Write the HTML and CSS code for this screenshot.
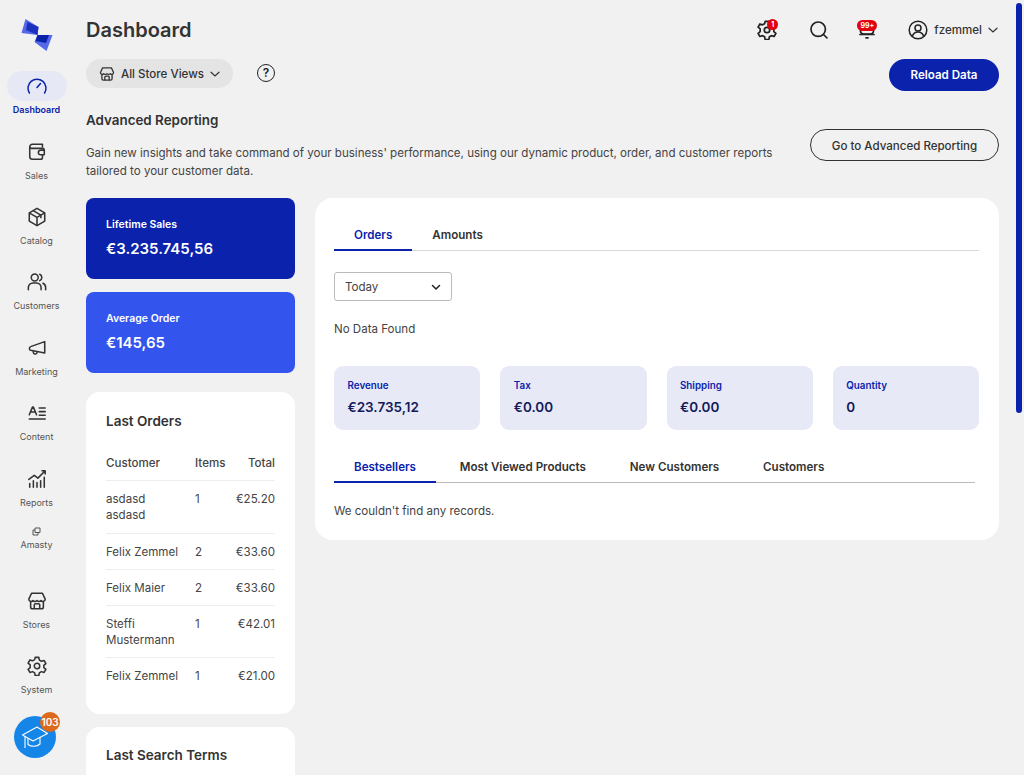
FILE: index.html
```html
<!DOCTYPE html>
<html lang="en">
  <head>
    <meta charset="utf-8">
    <title>Dashboard</title>
    <link rel="stylesheet" href="styles.css">
  </head>
  <body>
    <div class="app">
      <nav class="side">
        <div class="logo">
          <svg width="34" height="34" viewBox="0 0 34 34">
            <path d="M5.500 2 18.500 10 17.500 18 1.500 16Z" fill="#5568e8"/>
            <path d="M7.500 5 18.500 10 17.500 18 6 13Z" fill="#1c30c0"/>
            <path d="M17.500 18H32.500L26.500 34 14.500 25Z" fill="#5568e8"/>
            <path d="M17.500 18H29L26 26 15.500 24Z" fill="#0a22a8"/>
          </svg>
        </div>
        <a class="nav-item active">
          <span class="nav-icon">
            <svg width="22" height="22" viewBox="0 0 22 22" fill="none" stroke="#0a22a8" stroke-width="1.500" stroke-linecap="round"><path d="M3.400 18a9 9 0 1 1 15.200 0"/><path d="M11 12.500 14.500 8.500"/></svg>
          </span>
          Dashboard
        </a>
        <a class="nav-item">
          <span class="nav-icon">
            <svg width="20" height="20" viewBox="0 0 22 22" fill="none" stroke="#333" stroke-width="1.700" stroke-linejoin="round"><path d="M17 6V2.500H6A3 3 0 0 0 3 5.500V16a3 3 0 0 0 3 3h9a2 2 0 0 0 2-2v-3"/><path d="M3 5.500A2 2 0 0 0 5 7H17a2 2 0 0 1 2 2v5h-4a2.500 2.500 0 0 1 0-5h4"/></svg>
          </span>
          Sales
        </a>
        <a class="nav-item">
          <span class="nav-icon">
            <svg width="20" height="20" viewBox="0 0 22 22" fill="none" stroke="#333" stroke-width="1.700" stroke-linejoin="round"><path d="M11 1.500 19.500 6.500v9L11 20.500l-8.500-5v-9z"/><path d="M2.500 6.500l8.500 5 8.500-5M11 11.500v9M6.800 4l8.500 5v3.500"/></svg>
          </span>
          Catalog
        </a>
        <a class="nav-item">
          <span class="nav-icon">
            <svg width="20" height="20" viewBox="0 0 22 22" fill="none" stroke="#333" stroke-width="1.700" stroke-linecap="round"><circle cx="8.500" cy="6" r="3.800"/><path d="M1.500 19.500v-2.500a5 5 0 0 1 5-5h4a5 5 0 0 1 5 5v2.500"/><path d="M14 2.500a3.800 3.800 0 0 1 0 7M17.500 12.300a5 5 0 0 1 3 4.700v2.500"/></svg>
          </span>
          Customers
        </a>
        <a class="nav-item">
          <span class="nav-icon">
            <svg width="20" height="20" viewBox="0 0 22 22" fill="none" stroke="#333" stroke-width="1.700" stroke-linejoin="round"><path d="M19.500 4v12.500L4 13.500C2.200 13 2.200 10 4 9.500z"/><path d="M7 14.200v1.800a1.500 1.500 0 0 0 1.500 1.500h1a1.500 1.500 0 0 0 1.500-1.500v-.8"/></svg>
          </span>
          Marketing
        </a>
        <a class="nav-item">
          <span class="nav-icon">
            <svg width="20" height="20" viewBox="0 0 22 22" fill="none" stroke="#333" stroke-width="1.700" stroke-linecap="round"><path d="M2.500 13 6 4.500h1L10.500 13M4 10h5" stroke-linejoin="round"/><path d="M13.500 5.500H20M13.500 9.500H20M13.500 13.500H20M2.500 17.500H20"/></svg>
          </span>
          Content
        </a>
        <a class="nav-item">
          <span class="nav-icon">
            <svg width="20" height="20" viewBox="0 0 22 22" fill="none" stroke="#333" stroke-width="1.700" stroke-linecap="round" stroke-linejoin="round"><path d="M2 11.500 8 7l4 3 8-8M16.500 2H20v3.500"/><path d="M3 20v-4M7 20v-7M11 20v-5M15 20v-7M19 20V9"/></svg>
          </span>
          Reports
        </a>
        <a class="nav-item small">
          <span class="nav-icon">
            <svg width="9" height="9" viewBox="0 0 9 9" fill="none" stroke="#555" stroke-width="1"><path d="M3 1h5v4.500H3z"/><path d="M3 3H1v5h5V5.500"/></svg>
          </span>
          Amasty
        </a>
        <a class="nav-item">
          <span class="nav-icon">
            <svg width="20" height="20" viewBox="0 0 22 22" fill="none" stroke="#333" stroke-width="1.700" stroke-linejoin="round"><path d="M5 2.500h12l3 6.500a2.500 2.500 0 0 1-4.500 1.500 3 3 0 0 1-4.500 0 3 3 0 0 1-4.500 0A2.500 2.500 0 0 1 2 9z"/><path d="M4 11.500V17.500a2 2 0 0 0 2 2h10a2 2 0 0 0 2-2v-6"/><path d="M8 19.500v-4a1.500 1.500 0 0 1 1.500-1.500h3a1.500 1.500 0 0 1 1.500 1.500v4"/></svg>
          </span>
          Stores
        </a>
        <a class="nav-item">
          <span class="nav-icon">
            <svg width="20" height="20" viewBox="0 0 22 22" fill="none" stroke="#333" stroke-width="1.700" stroke-linejoin="round"><path d="M9 1.500h4l.6 3 2.300 1.300 2.900-.9 2 3.400-2.300 2v2.400l2.300 2-2 3.400-2.900-.9-2.300 1.300-.6 3H9l-.6-3-2.300-1.300-2.900.9-2-3.400 2.300-2V9.800l-2.300-2 2-3.400 2.900.9 2.300-1.300z"/><circle cx="11" cy="11" r="3"/></svg>
          </span>
          System
        </a>
      </nav>

      <main class="main">
        <header class="topbar">
          <h1>Dashboard</h1>
          <div class="top-actions">
            <span class="top-icon icon-gear">
              <svg width="20" height="20" viewBox="0 0 22 22" fill="none" stroke="#222" stroke-width="1.900" stroke-linejoin="round"><path d="M9 1.500h4l.6 3 2.300 1.300 2.900-.9 2 3.400-2.300 2v2.400l2.300 2-2 3.400-2.900-.9-2.300 1.300-.6 3H9l-.6-3-2.300-1.300-2.900.9-2-3.400 2.300-2V9.800l-2.300-2 2-3.400 2.900.9 2.300-1.300z"/><circle cx="11" cy="11" r="3"/></svg>
              <span class="dot">1</span>
            </span>
            <span class="top-icon icon-search">
              <svg width="20" height="20" viewBox="0 0 20 20" fill="none" stroke="#222" stroke-width="1.700" stroke-linecap="round"><circle cx="9.200" cy="9.200" r="7.200"/><path d="M14.500 14.500 18 18"/></svg>
            </span>
            <span class="top-icon icon-bell">
              <svg width="20" height="20" viewBox="0 0 20 20" fill="none" stroke="#222" stroke-width="1.700" stroke-linecap="round"><path d="M3.500 5v6a3 3 0 0 0 3 3h7a3 3 0 0 0 3-3V5"/><path d="M3 14.500h14M9 17.800h2"/></svg>
              <span class="dot wide">99+</span>
            </span>
            <span class="user">
              <svg width="20" height="20" viewBox="0 0 20 20" fill="none" stroke="#222" stroke-width="1.500"><circle cx="10" cy="10" r="8.800"/><circle cx="10" cy="8" r="3"/><path d="M4.500 16.500a5 4 0 0 1 11 0"/></svg>
              <span class="user-name">fzemmel</span>
              <svg class="chev" width="10" height="10" viewBox="0 0 10 10" fill="none" stroke="#333" stroke-width="1.200" stroke-linecap="round"><path d="M1 3.200 5 7l4-3.800"/></svg>
            </span>
          </div>
        </header>

        <div class="toolbar">
          <div class="store-switch">
            <svg width="16" height="16" viewBox="0 0 22 22" fill="none" stroke="#333" stroke-width="1.800" stroke-linejoin="round"><path d="M5 2.500h12l3 6.500a2.500 2.500 0 0 1-4.500 1.500 3 3 0 0 1-4.500 0 3 3 0 0 1-4.500 0A2.500 2.500 0 0 1 2 9z"/><path d="M4 11.500V17.500a2 2 0 0 0 2 2h10a2 2 0 0 0 2-2v-6"/><path d="M8 19.500v-4a1.500 1.500 0 0 1 1.500-1.500h3a1.500 1.500 0 0 1 1.500 1.500v4"/></svg>
            All Store Views
            <svg width="10" height="10" viewBox="0 0 10 10" fill="none" stroke="#333" stroke-width="1.200" stroke-linecap="round"><path d="M1 3.200 5 7l4-3.800"/></svg>
          </div>
          <span class="help">?</span>
          <button class="btn-primary">Reload Data</button>
        </div>

        <section class="promo">
          <div class="promo-text">
            <h2>Advanced Reporting</h2>
            <p>Gain new insights and take command of your business' performance, using our dynamic product, order, and customer reports tailored to your customer data.</p>
          </div>
          <button class="btn-outline">Go to Advanced Reporting</button>
        </section>

        <div class="columns">
          <div class="col-left">
            <div class="stat dark">
              <span>Lifetime Sales</span>
              <strong>€3.235.745,56</strong>
            </div>
            <div class="stat light">
              <span>Average Order</span>
              <strong>€145,65</strong>
            </div>
            <div class="card orders">
              <h3>Last Orders</h3>
              <table>
                <tr><th>Customer</th><th>Items</th><th class="num">Total</th></tr>
                <tr class="first"><td>asdasd<br>asdasd</td><td>1</td><td class="num">€25.20</td></tr>
                <tr><td>Felix Zemmel</td><td>2</td><td class="num">€33.60</td></tr>
                <tr><td>Felix Maier</td><td>2</td><td class="num">€33.60</td></tr>
                <tr><td>Steffi<br>Mustermann</td><td>1</td><td class="num">€42.01</td></tr>
                <tr><td>Felix Zemmel</td><td>1</td><td class="num">€21.00</td></tr>
              </table>
            </div>
            <div class="card terms">
              <h3>Last Search Terms</h3>
            </div>
          </div>

          <div class="panel">
            <div class="tabs">
              <span class="tab on">Orders</span>
              <span class="tab">Amounts</span>
            </div>
            <div class="select">
              Today
              <svg width="10" height="10" viewBox="0 0 10 10" fill="none" stroke="#222" stroke-width="1.500" stroke-linecap="round"><path d="M1.500 3.500 5 7l3.500-3.500"/></svg>
            </div>
            <p class="empty">No Data Found</p>
            <div class="totals">
              <div class="total"><span>Revenue</span><strong>€23.735,12</strong></div>
              <div class="total"><span>Tax</span><strong>€0.00</strong></div>
              <div class="total"><span>Shipping</span><strong>€0.00</strong></div>
              <div class="total"><span>Quantity</span><strong>0</strong></div>
            </div>
            <div class="tabs tabs-grids">
              <span class="tab on">Bestsellers</span>
              <span class="tab">Most Viewed Products</span>
              <span class="tab">New Customers</span>
              <span class="tab">Customers</span>
            </div>
            <p class="no-records">We couldn't find any records.</p>
          </div>
        </div>
      </main>
    </div>

    <a class="learn">
      <svg width="28" height="24" viewBox="0 0 28 24" fill="none" stroke="#fff" stroke-width="1.100" stroke-linejoin="round"><path d="M1.500 10 16 2l10.500 6.500L12 16z"/><path d="M7 13v6.500c3 2.500 9 2.500 12-.5v-6.500"/><path d="M4 11.500V23"/></svg>
      <span class="learn-count">103</span>
    </a>
    <div class="scroll-thumb"></div>
  </body>
</html>
```

FILE: styles.css
```css
* { box-sizing: border-box; }

html, body {
  margin: 0;
  height: 775px;
  overflow: hidden;
}

body {
  background: #f1f1f1;
  color: #333;
  font-family: Inter, "Liberation Sans", sans-serif;
  font-size: 11.550px;
}

.app {
  display: flex;
}

/* left menu */
.side {
  width: 73px;
  flex: none;
  padding-top: 17px;
}

.logo {
  display: flex;
  justify-content: center;
  height: 54.200px;
}

.nav-item {
  display: flex;
  flex-direction: column;
  align-items: center;
  height: 65.400px;
  font-size: 9px;
  line-height: 12px;
  color: #555;
}

.nav-icon {
  display: flex;
  align-items: center;
  justify-content: center;
  width: 60px;
  height: 30px;
  margin-bottom: 3px;
  border-radius: 15px;
}

.nav-item.active {
  color: #0a22a8;
  font-weight: 600;
}

.nav-item.active .nav-icon {
  background: #e6e8f5;
}

.nav-item.small {
  height: 60px;
  margin-top: -3px;
}

.nav-item.small .nav-icon {
  height: 11px;
  margin-bottom: 2px;
}

/* main area */
.main {
  width: 926px;
  flex: none;
  padding-left: 13px;
}

.topbar {
  display: flex;
  align-items: center;
  justify-content: space-between;
  height: 59px;
}

h1 {
  margin: 0;
  font-size: 20px;
  font-weight: 600;
  color: #333;
}

.top-actions {
  display: flex;
  align-items: center;
}

.top-icon {
  position: relative;
  display: flex;
}

.icon-gear { margin-right: 32px; }
.icon-search { margin-right: 28px; }
.icon-bell { margin-right: 31px; }

.dot {
  position: absolute;
  top: -1px;
  right: -1px;
  min-width: 11px;
  height: 11px;
  border-radius: 6px;
  background: #e3000f;
  color: #fff;
  font-size: 7px;
  font-weight: 700;
  line-height: 11px;
  text-align: center;
}

.dot.wide {
  top: 0;
  right: 0;
  width: 20px;
  font-size: 7px;
}

.user {
  display: flex;
  align-items: center;
  gap: 6px;
  margin-right: 1px;
  font-weight: 500;
  color: #333;
}

.chev {
  margin-left: 0;
}

.toolbar {
  display: flex;
  align-items: flex-start;
}

.store-switch {
  display: flex;
  align-items: center;
  gap: 6px;
  width: 147px;
  height: 29px;
  padding-left: 13px;
  border-radius: 15px;
  background: #e4e4e4;
  font-weight: 500;
  color: #333;
}

.help {
  width: 18px;
  height: 18px;
  margin: 5px 0 0 24px;
  border: 1.500px solid #222;
  border-radius: 50%;
  font-size: 12px;
  font-weight: 600;
  line-height: 15px;
  text-align: center;
  color: #222;
}

button {
  font-family: inherit;
}

.btn-primary {
  width: 110px;
  height: 32px;
  margin-left: auto;
  border: 0;
  border-radius: 16px;
  background: #0a22ac;
  color: #fff;
  font-size: 11.550px;
  font-weight: 600;
}

.promo {
  display: flex;
  align-items: center;
  justify-content: space-between;
  margin-top: 20px;
}

.promo-text {
  width: 700px;
}

h2 {
  margin: 0;
  font-size: 13.400px;
  line-height: 18px;
  font-weight: 600;
  color: #333;
}

.promo p {
  margin: 15px 0 0;
  line-height: 18px;
  color: #444;
}

.btn-outline {
  width: 189px;
  height: 32px;
  margin-bottom: 2px;
  padding-top: 3px;
  border: 1.500px solid #333;
  border-radius: 16px;
  background: transparent;
  color: #333;
  font-size: 11.550px;
  font-weight: 500;
}

.columns {
  display: flex;
  gap: 19.500px;
  margin-top: 18px;
  align-items: flex-start;
}

.col-left {
  display: flex;
  flex-direction: column;
  width: 209px;
  flex: none;
}

.stat {
  display: flex;
  flex-direction: column;
  gap: 8px;
  height: 81px;
  padding: 20px;
  border-radius: 8px;
  color: #fff;
}

.stat span {
  font-size: 10.500px;
  font-weight: 600;
  line-height: 13px;
}

.stat strong {
  font-size: 15px;
  font-weight: 600;
  line-height: 20px;
}

.stat.dark {
  background: #0a22ac;
  margin-bottom: 13px;
}

.stat.light {
  background: #3355ee;
  margin-bottom: 19px;
}

.card {
  padding: 20px;
  border-radius: 14px;
  background: #fff;
}

.card h3 {
  margin: 0;
  font-size: 13.500px;
  font-weight: 600;
  line-height: 18px;
  color: #333;
}

.orders {
  height: 322px;
  margin-bottom: 13px;
}

.orders table {
  width: 100%;
  margin-top: 18px;
  border-collapse: collapse;
  table-layout: fixed;
  line-height: 16px;
}

.orders th {
  padding: 7px 0 9px;
  text-align: left;
  font-weight: 500;
  color: #444;
}

.orders th:first-child {
  width: 89px;
}

.orders td {
  padding: 10px 0 9px;
  vertical-align: top;
  border-top: 1px solid #eeeeee;
  color: #444;
}

.orders .first td {
  padding-bottom: 10px;
}

.orders td:first-child {
  white-space: nowrap;
}

.orders .num {
  text-align: right;
}

.terms {
  height: 120px;
  padding-top: 19px;
}

/* right panel */
.panel {
  width: 684.500px;
  height: 342px;
  padding: 20px 20px 20px 19.500px;
  border-radius: 18px;
  background: #fff;
}

.tabs {
  display: flex;
  height: 33px;
  border-bottom: 1px solid #d8d8d8;
}

.tab {
  padding: 10px 20px 0;
  font-size: 11.600px;
  font-weight: 600;
  color: #333;
}

.tab.on {
  margin-bottom: -1px;
  border-bottom: 2px solid #0a22ac;
  color: #0a22ac;
}

.select {
  display: flex;
  align-items: center;
  justify-content: space-between;
  width: 118px;
  height: 29px;
  margin-top: 21px;
  padding: 0 10px;
  border: 1px solid #bbb;
  border-radius: 3px;
  color: #444;
}

.empty {
  margin: 21px 0 0;
  line-height: 15px;
  color: #444;
}

.totals {
  display: flex;
  gap: 20px;
  margin-top: 29px;
}

.total {
  display: flex;
  flex: 1;
  flex-direction: column;
  gap: 6px;
  height: 64px;
  padding: 14px 13.500px 0;
  border-radius: 9px;
  background: #e7eaf6;
}

.total span {
  font-size: 9.800px;
  font-weight: 600;
  line-height: 12px;
  color: #0a22ac;
}

.total strong {
  font-size: 13.500px;
  font-weight: 600;
  line-height: 18px;
  color: #14195a;
}

.tabs-grids {
  gap: 3.800px;
  margin: 20px 4px 0 0;
  border-bottom-color: #bbb;
}

.no-records {
  margin: 20px 0 0;
  line-height: 16px;
  color: #444;
}

/* floating learning button, over the menu */
.learn {
  position: absolute;
  left: 14px;
  top: 716px;
  display: flex;
  align-items: center;
  justify-content: center;
  width: 42px;
  height: 42px;
  border-radius: 50%;
  background: #1585e8;
}

.learn-count {
  position: absolute;
  top: -4px;
  right: -4px;
  width: 20px;
  height: 20px;
  border-radius: 50%;
  background: #dd6a1c;
  color: #fff;
  font-size: 10px;
  font-weight: 600;
  line-height: 20px;
  text-align: center;
}

.scroll-thumb {
  position: absolute;
  left: 1016px;
  top: 3px;
  width: 6px;
  height: 410px;
  border-radius: 3px;
  background: #0a22ac;
}
```
